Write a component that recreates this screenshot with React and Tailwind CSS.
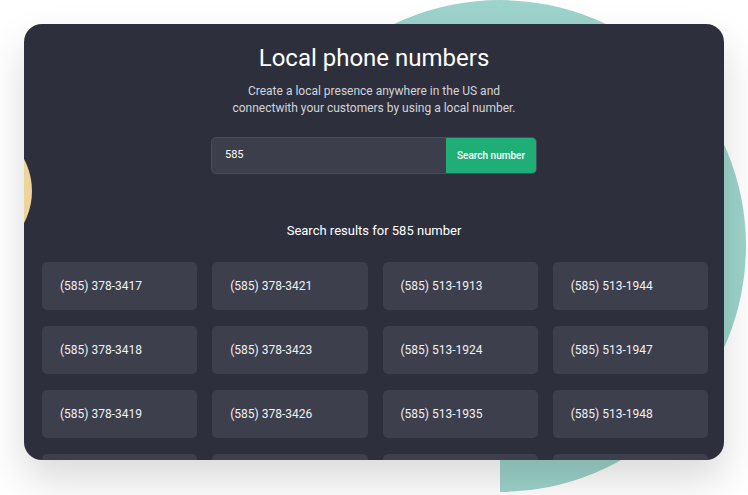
import React from 'react'

const numbers = [
  '(585) 378-3417',
  '(585) 378-3421',
  '(585) 513-1913',
  '(585) 513-1944',
  '(585) 378-3418',
  '(585) 378-3423',
  '(585) 513-1924',
  '(585) 513-1947',
  '(585) 378-3419',
  '(585) 378-3426',
  '(585) 513-1935',
  '(585) 513-1948'
]

const App = () => {
  return (
    <div className="relative w-[748px] h-[495px] overflow-hidden bg-white font-['Roboto',sans-serif]">
      {/* teal backdrop */}
      <svg className="absolute left-0 top-0" width="748" height="495" viewBox="0 0 748 495">
        <path d="M500 246 L500 492 A246 246 0 1 0 254 246 Z" fill="#9dd3ca" />
      </svg>

      <div className="relative pt-6 px-6">
        <div className="relative h-[436px] w-[700px] overflow-hidden rounded-[18px] bg-[#2d303c] shadow-[0_20px_40px_rgba(0,0,0,0.15)]">
          {/* yellow dot */}
          <div className="absolute left-[-128px] top-[99px] h-[136px] w-[136px] rounded-full bg-[#edd49b]" />

          <div className="relative flex flex-col items-center pt-[20px]">
            <h1 className="text-[24px] leading-[29px] font-normal text-white">Local phone numbers</h1>
            <p className="mt-[10px] text-center text-[12px] leading-[17px] text-[#d3d4d9]">
              Create a local presence anywhere in the US and
              <br />
              connectwith your customers by using a local number.
            </p>

            <div className="mt-[20px] flex h-[37px] w-[326px] overflow-hidden rounded-[5px] border border-[#4a4c59] bg-[#3c3e4b]">
              <input
                className="flex-1 bg-transparent pl-[13px] text-[11px] text-white outline-none"
                defaultValue="585"
              />
              <button className="w-[90px] bg-[#1fae75] text-[10px] font-medium text-white">Search number</button>
            </div>

            <p className="mt-[48px] text-[13px] leading-[18px] text-white">Search results for 585 number</p>
          </div>

          <div className="mt-[22px] grid grid-cols-4 gap-x-[15px] gap-y-[16px] pl-[18px] pr-[16px]">
            {numbers.map((n) => (
              <div
                key={n}
                className="flex h-[48px] items-center rounded-[5px] bg-[#3d3f4c] pl-[18px] text-[12px] text-[#f1f1f4]"
              >
                {n}
              </div>
            ))}
            {/* next row, cut off by the card edge */}
            <div className="h-[48px] rounded-[5px] bg-[#3d3f4c]" />
            <div className="h-[48px] rounded-[5px] bg-[#3d3f4c]" />
            <div className="h-[48px] rounded-[5px] bg-[#3d3f4c]" />
            <div className="h-[48px] rounded-[5px] bg-[#3d3f4c]" />
          </div>
        </div>
      </div>
    </div>
  )
}

export default App
